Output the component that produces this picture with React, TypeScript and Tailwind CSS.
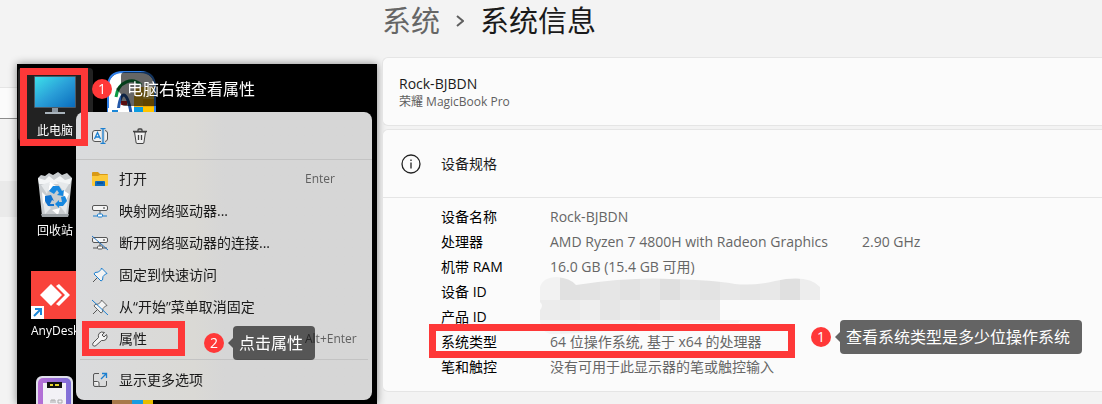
import React from 'react';

const SPECS = [
  { label: '设备名称', value: 'Rock-BJBDN' },
  { label: '处理器', value: 'AMD Ryzen 7 4800H with Radeon Graphics', extra: '2.90 GHz' },
  { label: '机带 RAM', value: '16.0 GB (15.4 GB 可用)' },
  { label: '设备 ID', value: '', masked: true },
  { label: '产品 ID', value: '' },
  { label: '系统类型', value: '64 位操作系统, 基于 x64 的处理器', marked: true },
  { label: '笔和触控', value: '没有可用于此显示器的笔或触控输入' },
];

// mosaic rows over the ids, 20px blocks
const MOSAIC = [
  { y: 0, h: 23, fills: ['#f2f2f2', '#e1e1e1', '#e3e3e3', '#e6e6e6', '#e2e2e2', '#e7e7e7', '#dfdfdf', '#e6e6e6', '#e3e3e3', '#e8e8e8', '#e6e6e6', '#e8e8e8', '#e0e0e0', '#ededed'] },
  { y: 23, h: 20, fills: ['#ececec', '#ebebeb', '#eeeeee', '#e6e6e6', '#eaeaea', '#e6e6e6', '#ececec', '#eaeaea', '#e9e9e9'] },
  { y: 43, h: 16, fills: ['#f3f3f3', '#f0f0f0', '#f3f3f3', '#f1f1f1', '#f4f4f4', '#f2f2f2', '#f3f3f3', '#f4f4f4', '#f1f1f1', '#f4f4f4', '#f2f2f2'] },
];

function Mosaic() {
  return (
    <svg className="absolute -left-[10px] -top-0.5" width="280" height="59" viewBox="0 0 280 59" aria-hidden="true">
      <clipPath id="mosaic">
        <path d="M0 10Q3 0 17 0Q30 1 36 8Q90 0 130 2Q175 3 195 7Q215 9 235 4Q268-3 280 10V23H180V43H201L198 46H100Q50 58 10 57Q0 54 0 44V33Q4 28 0 25Z" />
      </clipPath>
      <g clipPath="url(#mosaic)">
        {MOSAIC.map((row) =>
          row.fills.map((fill, i) => (
            <rect key={`${row.y}-${i}`} x={i * 20} y={row.y} width="20" height={row.h} fill={fill} />
          ))
        )}
      </g>
    </svg>
  );
}

function Callout({ n, children }: { n: number; children: React.ReactNode }) {
  return (
    <div className="flex items-center gap-[9px] whitespace-nowrap text-white">
      <span className="flex h-5 w-5 items-center justify-center rounded-full bg-[#ff3838] text-sm leading-5">{n}</span>
      <span className="relative h-[34px] rounded-[4px] bg-black/60 pl-1.5 pr-3 text-base leading-[34px]">
        <svg className="absolute -left-[5px] top-3" width="5" height="10" viewBox="0 0 5 10" aria-hidden="true">
          <path d="M5 0V10L0 5Z" fill="#000" fillOpacity=".6" />
        </svg>
        {children}
      </span>
    </div>
  );
}

/* ---------- desktop icons ---------- */

function MonitorIcon() {
  return (
    <svg width="44" height="40" viewBox="0 0 44 40">
      <defs>
        <linearGradient id="screen" x1="0" y1="0" x2="1" y2="1">
          <stop offset="0" stopColor="#3de0ea" />
          <stop offset=".5" stopColor="#2a9fd8" />
          <stop offset="1" stopColor="#0a6cbc" />
        </linearGradient>
      </defs>
      <rect x="1" y="1" width="42" height="32" rx="1" fill="#4d5a66" />
      <rect x="2" y="2" width="40" height="30" fill="url(#screen)" />
      <path d="M19 33h6v5h-6z" fill="#8a959f" />
      <path d="M12 37h20v2H12z" fill="#a9b3bb" />
    </svg>
  );
}

function RecycleIcon() {
  return (
    <svg width="38" height="46" viewBox="0 0 38 46">
      <path d="M2 6L5 3L9 4L13 1L17 3L22 0L26 3L31 1L34 4L36 6L32 44H6Z" fill="#c9cdd0" />
      <path d="M2 6L9 8L13 4L18 8L24 4L29 8L36 6L34 12H3Z" fill="#f3f5f6" />
      <path d="M5 13L14 10L11 22ZM20 9L33 12L28 20ZM7 29L15 36L9 42ZM24 34L32 27L30 42Z" fill="#e6e9eb" />
      <path d="M14 10L20 14L12 19ZM6 20L12 26L7 32ZM27 18L33 22L29 30ZM16 38L24 36L22 43Z" fill="#fff" />
      <path d="M5 42H33L32 45H6Z" fill="#9ca2a6" />
      <path d="M13 19L17 14H23L26 19L28 18L27 24L21 23L23 21L21 18L18 22Z" fill="#1688e0" />
      <path d="M9 24L15 23L18 29L16 28L14 32H18V34H12L9 29Z" fill="#1173cf" />
      <path d="M25 25L29 24L31 29L27 34H23V36L19 32L23 28V30H26Z" fill="#1688e0" />
    </svg>
  );
}

function AnyDeskIcon() {
  return (
    <svg width="48" height="48" viewBox="0 0 48 48">
      <path d="M0 0H48V48H0Z" fill="#f9433b" />
      <path d="M9 24L20 13L31 24L20 35Z" fill="#fff" />
      <path d="M25 15L28 13L39 24L28 35L25 33L34 24Z" fill="#fff" />
      <path d="M0 35H13V48H0Z" fill="#fff" />
      <path d="M3 45L9 39M4 38H10V44" fill="none" stroke="#1b87d8" strokeWidth="2" />
    </svg>
  );
}

function PhoneIcon() {
  return (
    <svg width="40" height="40" viewBox="0 0 40 40">
      <defs>
        <linearGradient id="phone" x1="0" y1="0" x2="1" y2="0">
          <stop offset="0" stopColor="#b86fd6" />
          <stop offset="1" stopColor="#7d6fd8" />
        </linearGradient>
      </defs>
      <rect x="1" y="1" width="37" height="48" rx="6" fill="#dfe0ea" />
      <rect x="3" y="3" width="33" height="46" rx="5" fill="url(#phone)" />
      <path d="M8 8H31V40H8Z" fill="#f2f1f6" />
      <path d="M12 7H27V13H12Z" fill="#111" />
      <path d="M15 10H18M20 10H24" stroke="#e5d32a" strokeWidth="2" />
      <path d="M16 28V25H20V28M18 25V28M23 25H27V28H23Z" fill="none" stroke="#aaa" />
    </svg>
  );
}

function RoundAppIcon() {
  return (
    <svg width="50" height="44" viewBox="0 0 50 44">
      <clipPath id="round">
        <rect x="1" y="1" width="47" height="60" rx="15" />
      </clipPath>
      <g clipPath="url(#round)">
        <path d="M0 0H50V44H0Z" fill="#fff" />
        <path d="M27 16H36V36H27Z" fill="#f5b81c" />
        <path d="M36 16H50V28H36Z" fill="#ffd24a" />
        <path d="M36 28H50V36H36Z" fill="#f0a800" />
        <path d="M27 36H36V44H27Z" fill="#0a9be0" />
        <path d="M36 36H50V44H36Z" fill="#ffc400" />
        <path d="M9 26C11 10 26 6 34 14" fill="none" stroke="#0b9a43" strokeWidth="3" />
        <path d="M11 42C13 18 20 18 24 42" fill="none" stroke="#2358a8" strokeWidth="3" />
        <path d="M14 30H20V34H14Z" fill="#d8232a" />
      </g>
      <path d="M1 44V16Q1 1 16 1H33Q48 1 48 16V44" fill="none" stroke="#2f7fe8" strokeWidth="2" />
      <path d="M1 37H13V44H1Z" fill="#fff" />
      <path d="M5 40H10V44" fill="none" stroke="#1b87d8" strokeWidth="2" />
    </svg>
  );
}

/* ---------- menu icons ---------- */

function RenameIcon() {
  return (
    <svg width="16" height="16" viewBox="0 0 16 16" fill="none">
      <path d="M9 2.500H3Q.5 2.500 .5 5V11Q.5 13.500 3 13.500H9M13 2.500Q15.500 3 15.500 5V11Q15.500 13 13 13.500" fill="#f0f0f0" stroke="#555" />
      <path d="M2.500 11L5.500 4.500L8.500 11M3.500 9H7.500" stroke="#1b7fd0" strokeWidth="1.300" />
      <path d="M11 1V15M8.500 .5H13.500M8.500 15.500H13.500" stroke="#1b7fd0" strokeWidth="1.300" />
    </svg>
  );
}

function TrashIcon() {
  return (
    <svg width="16" height="16" viewBox="0 0 16 16" fill="none" stroke="#444">
      <path d="M2.500 4L4 14Q4 15.500 5 15.500H11Q12 15.500 12 14L13.500 4Z" fill="#f0f0f0" />
      <path d="M1 3.500H15M6 3V2Q6 1 7 1H9Q10 1 10 2V3" strokeWidth="1.300" />
      <path d="M6.500 7V12M9.500 7V12" strokeWidth="1.300" />
    </svg>
  );
}

function FolderIcon() {
  return (
    <svg width="16" height="16" viewBox="0 0 16 16">
      <path d="M0 2Q0 1 1 1H6L8 3H15Q16 3 16 4V14H0Z" fill="#d99a16" />
      <path d="M0 5H6L8 4H16V14Q16 15 15 15H1Q0 15 0 14Z" fill="#fcc93a" />
      <path d="M3 15V11Q3 10 4 10H12Q13 10 13 11V15Z" fill="#0f6cbd" />
      <path d="M5 12H11" stroke="#063f7a" />
    </svg>
  );
}

function DriveIcon({ off = false }: { off?: boolean }) {
  return (
    <svg width="16" height="16" viewBox="0 0 16 16" fill="none">
      <rect x=".5" y="2.500" width="15" height="5" rx="1.500" fill="#f5f5f5" stroke="#555" />
      <path d="M11 5H13" stroke="#333" />
      <path d="M8 8V11" stroke="#555" />
      <path d="M1 13H5M11 13H15" stroke={off ? '#555' : '#1b7fd0'} />
      <rect x="5.500" y="11" width="5" height="3" rx="1" fill="#fff" stroke={off ? '#555' : '#1b7fd0'} />
      {off && <path d="M0 1L16 15" stroke="#2273c0" />}
    </svg>
  );
}

function PinIcon({ off = false }: { off?: boolean }) {
  return (
    <svg width="16" height="16" viewBox="0 0 16 16" fill="none">
      <path d="M1 15L5 11" stroke="#555" />
      <path d="M9.500 1L15 6.500L13.500 7L11 9.500L10.500 13L9 14L2 7L3 5.500L6.500 5L9 2.500Z" fill="#f3f3f3" stroke={off ? '#666' : '#1b7fd0'} strokeLinejoin="round" />
      {off && <path d="M0 1L16 16" stroke="#1b7fd0" />}
    </svg>
  );
}

function WrenchIcon() {
  return (
    <svg width="16" height="16" viewBox="0 0 16 16">
      <path d="M14.500 3.500L12 6L10 4L12.500 1.500Q9 0 7 2.500Q6 4 6.500 6.500L1 12Q0 14 1.500 15Q3 15.500 4 14.500L9.500 9.500Q12 10 14 8.500Q16 6 14.500 3.500Z" fill="#f3f3f3" stroke="#555" strokeLinejoin="round" />
    </svg>
  );
}

function MoreIcon() {
  return (
    <svg width="16" height="16" viewBox="0 0 16 16" fill="none">
      <path d="M7 1.500H3Q1.500 1.500 1.500 3V13Q1.500 14.500 3 14.500H13Q14.500 14.500 14.500 13V9" stroke="#555" />
      <path d="M1.500 9.500H5.500Q7 9.500 7 11V14.500" fill="#f3f3f3" stroke="#555" />
      <path d="M9 7L14.500 1.500M10 1.500H14.500V6" stroke="#1b7fd0" strokeWidth="1.300" />
    </svg>
  );
}

const MENU = [
  { label: '打开', icon: <FolderIcon />, hint: 'Enter' },
  { label: '映射网络驱动器...', icon: <DriveIcon /> },
  { label: '断开网络驱动器的连接...', icon: <DriveIcon off /> },
  { label: '固定到快速访问', icon: <PinIcon /> },
  { label: '从“开始”菜单取消固定', icon: <PinIcon off /> },
  { label: '属性', icon: <WrenchIcon />, hint: 'Alt+Enter', marked: true },
];

function ContextMenu() {
  return (
    <div className="absolute left-[59px] top-12 w-[296px] rounded-lg bg-linear-to-r from-[#dadbdd] via-[#dad9d5] via-40% to-[#d6d6d6] to-50% text-sm text-[#1a1a1a]">
      <div className="flex h-[47px] items-center gap-6 pl-4">
        <button aria-label="重命名"><RenameIcon /></button>
        <button aria-label="删除"><TrashIcon /></button>
      </div>
      <hr className="border-[#c3c3c3]" />
      <div className="pt-[3px]">
        {MENU.map((item) => (
          <div key={item.label} className="relative">
            <button className="flex h-8 w-full items-center pl-4 text-left">
              <span className="mr-[11px]">{item.icon}</span>
              <span className="w-[186px]">{item.label}</span>
              <span className="text-xs text-[#606060]">{item.hint}</span>
            </button>
            {item.marked && (
              <>
                <div className="absolute -top-0.5 left-1.5 h-[35px] w-[103px] border-[7px] border-[#fe3838]" />
                <div className="absolute left-32 top-[3px]">
                  <Callout n={2}>点击属性</Callout>
                </div>
              </>
            )}
          </div>
        ))}
      </div>
      <hr className="mx-1 mt-1 border-[#c3c3c3]" />
      <div className="py-1">
        <button className="flex h-8 w-full items-center gap-[11px] pl-4 text-left">
          <MoreIcon />
          显示更多选项
        </button>
      </div>
    </div>
  );
}

function Desktop() {
  return (
    <section className="relative mt-16 w-[360px] shrink-0 overflow-hidden bg-black text-xs text-white">
      <div className="absolute left-px top-1 h-[73px] w-[75px] rounded-sm bg-[#222]" />
      <div className="absolute left-4 top-[11px] flex flex-col items-center">
        <MonitorIcon />
        <span className="mt-[7px] leading-[18px]">此电脑</span>
      </div>
      <div className="absolute left-[19px] top-[108px] flex flex-col items-center">
        <RecycleIcon />
        <span className="mt-1 leading-[18px]">回收站</span>
      </div>
      <div className="absolute left-[14px] top-[207px] flex flex-col items-center">
        <AnyDeskIcon />
        <span className="mt-[3px] leading-[18px]">AnyDesk</span>
      </div>
      <div className="absolute left-[18px] top-[311px]"><PhoneIcon /></div>
      <div className="absolute left-[90px] top-[7px]"><RoundAppIcon /></div>
      <div className="absolute left-[95px] top-[335px] flex h-[5px]">
        <span className="w-5 bg-[#a8794a]" />
        <span className="w-[11px] bg-[#1a9be0]" />
        <span className="w-[10px] bg-[#e8bd00]" />
      </div>
      <ContextMenu />
      <div className="absolute left-[3px] top-1 h-[78px] w-[68px] border-[7px] border-[#fe3838]" />
      <div className="absolute left-[75px] top-2">
        <Callout n={1}>电脑右键查看属性</Callout>
      </div>
    </section>
  );
}

export default function App() {
  return (
    <div className="flex min-h-screen overflow-hidden bg-[#f3f3f3] font-['Open_Sans','Noto_Sans_CJK_SC',sans-serif]">
      {/* strip of the settings window left of the desktop */}
      <div className="w-[17px] shrink-0 pt-[87px]">
        <div className="h-8 border-b border-t border-b-[#8c8c8c] border-t-[#e5e5e5] bg-[#fbfbfb]" />
        <div className="mt-[62px] h-9 bg-[#eaeaea]" />
      </div>
      <div className="flex drop-shadow-[0_0_4px_rgba(0,0,0,0.45)]">
        <Desktop />
      </div>

      <main className="relative ml-[5px] min-w-0 flex-1">
        <h1 className="flex h-[57px] items-start text-[29px] leading-[42px] text-[#1a1a1a]">
          <span className="text-[#666]">系统</span>
          <svg className="mx-4 mt-[15px]" width="8" height="12" viewBox="0 0 8 12" fill="none" aria-hidden="true">
            <path d="M1 1L7 6L1 11" stroke="#5f5f5f" strokeWidth="2" />
          </svg>
          系统信息
        </h1>

        <section className="h-[69px] rounded-l-md border border-r-0 border-[#e5e5e5] bg-[#fbfbfb] pl-4 pt-[17px]">
          <p className="text-sm leading-[18px] text-[#1a1a1a]">Rock-BJBDN</p>
          <p className="text-xs leading-[18px] text-[#5f5f5f]">荣耀 MagicBook Pro</p>
        </section>

        <section className="mt-[3px] rounded-l-md border border-r-0 border-[#e5e5e5] bg-[#fbfbfb] text-sm">
          <h2 className="flex h-[67px] items-center gap-5 pl-[18px] text-[#1a1a1a]">
            <svg width="20" height="20" viewBox="0 0 20 20" fill="none" stroke="#222" aria-hidden="true">
              <circle cx="10" cy="10" r="9" strokeWidth="1.300" />
              <path d="M10 8.500V14.500M10 5.500V7" strokeWidth="1.300" />
            </svg>
            设备规格
          </h2>
          <hr className="border-[#e5e5e5]" />
          <div className="pb-3 pl-[58px] pt-1.5">
            <table>
              <tbody>
                {SPECS.map((row) => (
                  <tr key={row.label} className="h-[25px]">
                    <th scope="row" className="relative w-[109px] whitespace-nowrap p-0 text-left font-normal leading-[25px] text-black">
                      {row.label}
                      {row.marked && (
                        <>
                          <div className="absolute -left-3 -top-[5px] z-10 h-[34px] w-[366px] border-[7px] border-[#fe3838]" />
                          <div className="absolute -top-[9px] left-[370px] z-10">
                            <Callout n={1}>查看系统类型是多少位操作系统</Callout>
                          </div>
                        </>
                      )}
                    </th>
                    <td className="relative w-[312px] whitespace-nowrap p-0 leading-[25px] text-[#666]">
                      {row.value}
                      {row.masked && <Mosaic />}
                    </td>
                    <td className="whitespace-nowrap p-0 leading-[25px] text-[#666]">{row.extra}</td>
                  </tr>
                ))}
              </tbody>
            </table>
          </div>
        </section>
      </main>
    </div>
  );
}
